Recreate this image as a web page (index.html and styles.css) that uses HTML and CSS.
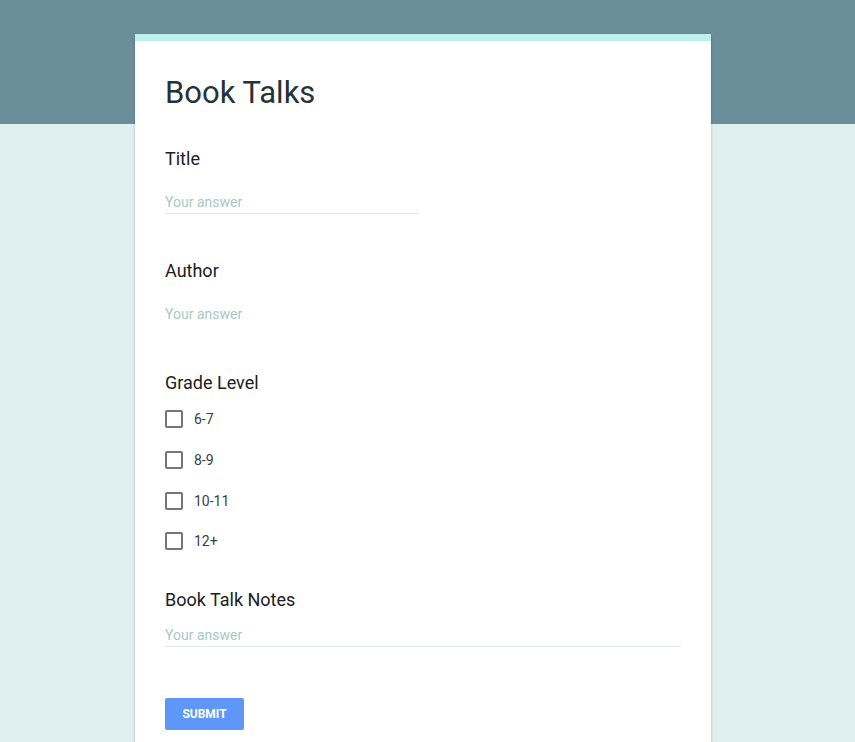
FILE: index.html
```html
<!DOCTYPE html>
<html>
<head>
<meta charset="utf-8">
<link rel="stylesheet" href="styles.css">
</head>
<body>
<div class="band"></div>
<main class="card">
  <h1 class="form-title">Book Talks</h1>
  <section class="q q-first">
    <div class="q-label">Title</div>
    <div class="answer answer-short">Your answer</div>
  </section>
  <section class="q">
    <div class="q-label">Author</div>
    <div class="answer answer-plain">Your answer</div>
  </section>
  <section class="q">
    <div class="q-label">Grade Level</div>
    <ul class="options">
      <li class="option"><span class="box"></span><span class="opt-text">6-7</span></li>
      <li class="option"><span class="box"></span><span class="opt-text">8-9</span></li>
      <li class="option"><span class="box"></span><span class="opt-text">10-11</span></li>
      <li class="option"><span class="box"></span><span class="opt-text">12+</span></li>
    </ul>
  </section>
  <section class="q q-notes">
    <div class="q-label">Book Talk Notes</div>
    <div class="answer answer-long">Your answer</div>
  </section>
  <div class="actions"><button class="submit">SUBMIT</button></div>
</main>
</body>
</html>
```

FILE: styles.css
```css
html, body {
  margin: 0;
  padding: 0;
}
body {
  background: #e0f0f0;
  font-family: Roboto, "Liberation Sans", Arial, sans-serif;
  position: relative;
  min-height: 742px;
}
.band {
  height: 124px;
  background: #6b8f9a;
  position: absolute;
  left: 0;
  right: 0;
  top: 0;
}
.card {
  position: relative;
  margin: 34px 0 0 135px;
  width: 576px;
  box-sizing: border-box;
  background: #fff;
  border-top: 7px solid #bdeff1;
  padding: 32px 30px 20px;
  min-height: 720px;
  box-shadow: 0 0 2px rgba(0,0,0,0.15), 0 2px 3px rgba(0,0,0,0.12);
}
.form-title {
  margin: 0;
  font-size: 31px;
  font-weight: 400;
  line-height: 40px;
  color: #263238;
}
.q {
  margin-top: 45px;
}
.q-first {
  margin-top: 34px;
}
.q-label {
  font-size: 18px;
  line-height: 24px;
  color: #202020;
}
.answer {
  font-size: 14px;
  line-height: 19px;
  padding-bottom: 1px;
  color: #a9c6c6;
  border-bottom: 1px solid transparent;
  margin-top: 22px;
}
.answer-short {
  width: 254px;
  border-bottom-color: #e2e8e8;
}
.answer-long {
  border-bottom-color: #e2e8e8;
  margin-top: 14px;
}
.options {
  list-style: none;
  margin: 4px 0 0;
  padding: 0;
}
.option {
  height: 40.67px;
  display: flex;
  align-items: center;
}
.box {
  width: 14px;
  height: 14px;
  border: 2px solid #757575;
  border-radius: 2px;
  margin-right: 11px;
}
.opt-text {
  font-size: 14px;
  color: #37404a;
}
.q-notes {
  margin-top: 26px;
}
.actions {
  margin-top: 51px;
}
.submit {
  width: 79px;
  height: 32px;
  border: none;
  border-radius: 2px;
  background: #5e97f6;
  color: #fff;
  font-family: Roboto, "Liberation Sans", Arial, sans-serif;
  font-weight: 700;
  font-size: 12px;
  padding: 0;
}
```
